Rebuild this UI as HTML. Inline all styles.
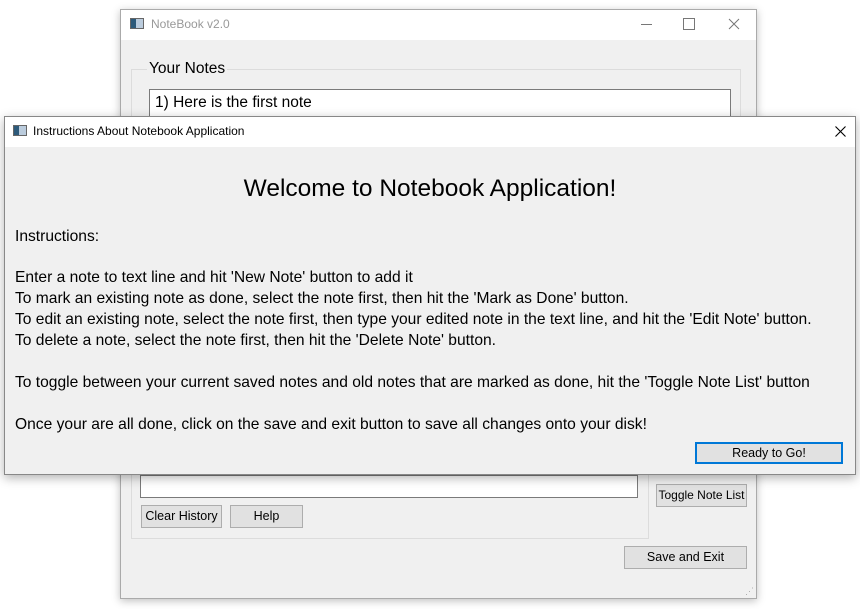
<!DOCTYPE html>
<html><head><style>
body{margin:0;width:860px;height:609px;background:#fff;position:relative;overflow:hidden;font-family:"Liberation Sans",sans-serif}
.a{position:absolute}
.btn{position:absolute;background:#e1e1e1;border:1px solid #adadad;font-size:12.5px;text-align:center;box-sizing:border-box;color:#000;white-space:nowrap}
.icon{position:absolute;width:14px;height:11px;border:1px solid #666;background:linear-gradient(90deg,#2d5a7a 0 40%,#bcd 40% 100%);box-sizing:border-box}
.t{position:absolute;font-size:15.6px;color:#000;white-space:nowrap}
</style></head><body>
<!-- back window -->
<div class="a" style="left:120px;top:9px;width:637px;height:590px;background:#f0f0f0;border:1px solid #aaa;box-sizing:border-box;box-shadow:0 2px 8px rgba(0,0,0,.25)">
 <div class="a" style="left:0;top:0;width:635px;height:30px;background:#fff"></div>
 <div class="icon" style="left:9px;top:8px"></div>
 <div class="a" style="left:30px;top:7px;font-size:12px;color:#999">NoteBook v2.0</div>
 <div class="a" style="left:520px;top:14px;width:11px;height:1px;background:#777"></div>
 <div class="a" style="left:562px;top:8px;width:10px;height:10px;border:1px solid #777"></div>
 <svg class="a" style="left:607px;top:8px" width="12" height="12"><path d="M1 1L11 11M11 1L1 11" stroke="#777" stroke-width="1"/></svg>
 <div class="a" style="left:10px;top:59px;width:608px;height:300px;border:1px solid #dcdcdc"></div>
 <div class="a" style="left:26px;top:50px;font-size:15.5px;background:#f0f0f0;padding:0 2px">Your Notes</div>
 <div class="a" style="left:28px;top:79px;width:580px;height:40px;background:#fff;border:1px solid #7a7a7a"></div>
 <div class="a" style="left:34px;top:84px;font-size:15.5px">1) Here is the first note</div>
 <div class="a" style="left:10px;top:440px;width:518px;height:89px;border:1px solid #dcdcdc;border-top:none;box-sizing:border-box"></div>
 <div class="a" style="left:19px;top:465px;width:498px;height:23px;background:#fff;border:1px solid #7a7a7a;box-sizing:border-box"></div>
 <div class="btn" style="left:535px;top:474px;width:91px;height:23px;line-height:21px;font-size:12px">Toggle Note List</div>
 <div class="btn" style="left:20px;top:495px;width:81px;height:23px;line-height:21px">Clear History</div>
 <div class="btn" style="left:109px;top:495px;width:73px;height:23px;line-height:21px">Help</div>
 <div class="btn" style="left:503px;top:536px;width:123px;height:23px;line-height:21px">Save and Exit</div>
 <div class="a" style="left:624px;top:576px;font-size:9px;color:#aaa">⋰</div>
</div>
<!-- dialog -->
<div class="a" style="left:4px;top:116px;width:852px;height:359px;background:#f0f0f0;border:1px solid #888;box-sizing:border-box;box-shadow:0 3px 10px rgba(0,0,0,.3)">
 <div class="a" style="left:0;top:0;width:850px;height:30px;background:#fff"></div>
 <div class="icon" style="left:8px;top:8px"></div>
 <div class="a" style="left:28px;top:7px;font-size:12px">Instructions About Notebook Application</div>
 <svg class="a" style="left:830px;top:9px" width="11" height="11"><path d="M0.5 0.5L10.5 10.5M10.5 0.5L0.5 10.5" stroke="#000" stroke-width="1.1"/></svg>
 <div class="a" style="left:0;width:850px;top:58px;text-align:center;font-size:24.5px">Welcome to Notebook Application!</div>
 <div class="t" style="left:10px;top:111px">Instructions:</div>
 <div class="t" style="left:10px;top:152px">Enter a note to text line and hit 'New Note' button to add it</div>
 <div class="t" style="left:10px;top:173px">To mark an existing note as done, select the note first, then hit the 'Mark as Done' button.</div>
 <div class="t" style="left:10px;top:194px">To edit an existing note, select the note first, then type your edited note in the text line, and hit the 'Edit Note' button.</div>
 <div class="t" style="left:10px;top:215px">To delete a note, select the note first, then hit the 'Delete Note' button.</div>
 <div class="t" style="left:10px;top:257px">To toggle between your current saved notes and old notes that are marked as done, hit the 'Toggle Note List' button</div>
 <div class="t" style="left:10px;top:299px">Once your are all done, click on the save and exit button to save all changes onto your disk!</div>
 <div class="btn" style="left:690px;top:325px;width:148px;height:22px;line-height:18px;border:2px solid #0078d7">Ready to Go!</div>
</div>
</body></html>
